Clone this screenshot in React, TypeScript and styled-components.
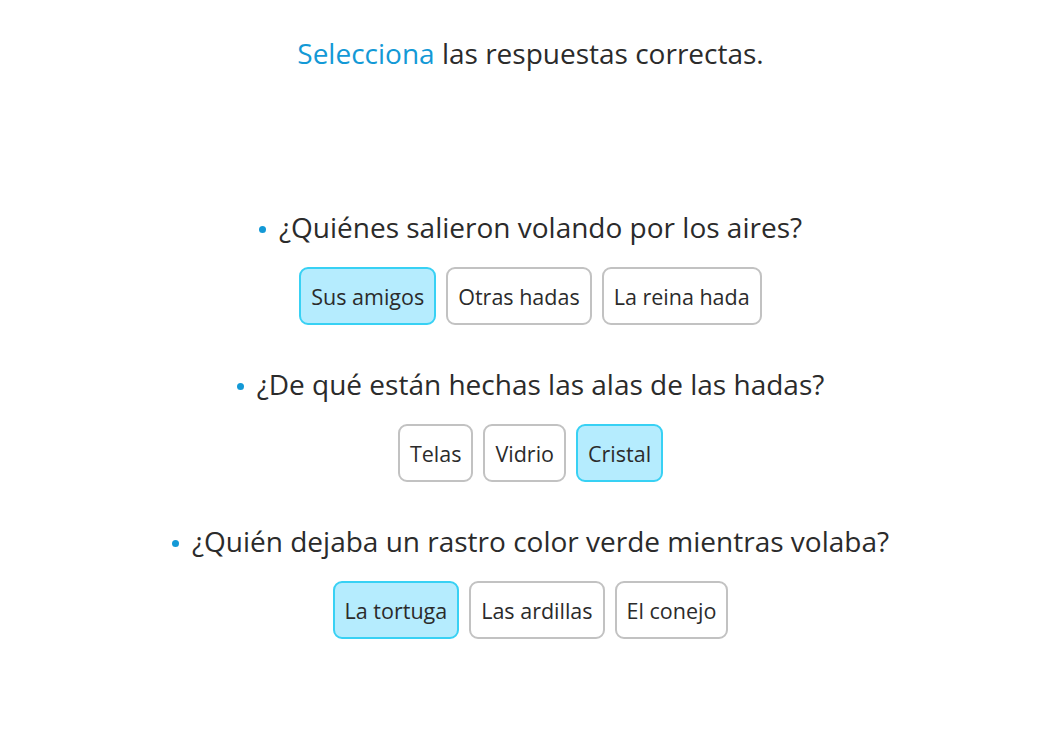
import React, { useState } from "react";
import styled, { createGlobalStyle } from "styled-components";

const Global = createGlobalStyle`
  html, body { margin: 0; padding: 0; background: #ffffff; }
  body { font-family: "Open Sans", "Noto Sans", sans-serif; color: #2b2b2b; }
`;

const Page = styled.div`
  display: flex;
  flex-direction: column;
  align-items: center;
  padding-top: 34px;
`;

const Title = styled.h1`
  margin: 0;
  font-size: 28px;
  font-weight: 400;
  line-height: 38px;
  color: #2b2b2b;
`;

const Accent = styled.span`
  color: #1399d6;
`;

const Questions = styled.div`
  display: flex;
  flex-direction: column;
  align-items: center;
  gap: 40px;
  margin-top: 136px;
`;

const Block = styled.div`
  display: flex;
  flex-direction: column;
  align-items: center;
  gap: 21px;
`;

const Question = styled.div`
  display: flex;
  align-items: center;
  gap: 13px;
  font-size: 28px;
  line-height: 38px;
`;

const Bullet = styled.span`
  width: 7px;
  height: 7px;
  margin-top: 4px;
  border-radius: 50%;
  background: #1399d6;
`;

const Options = styled.div`
  display: flex;
  gap: 10px;
`;

const Option = styled.button<{ $selected: boolean }>`
  font-family: inherit;
  font-size: 21.5px;
  color: #2b2b2b;
  height: 58px;
  padding: 0 10px;
  border-radius: 9px;
  border: 2.5px solid ${(p) => (p.$selected ? "#38d1f4" : "#c2c2c2")};
  background: ${(p) => (p.$selected ? "#b5ecfe" : "#ffffff")};
  cursor: pointer;
`;

const data = [
  { q: "¿Quiénes salieron volando por los aires?", opts: ["Sus amigos", "Otras hadas", "La reina hada"], sel: 0 },
  { q: "¿De qué están hechas las alas de las hadas?", opts: ["Telas", "Vidrio", "Cristal"], sel: 2 },
  { q: "¿Quién dejaba un rastro color verde mientras volaba?", opts: ["La tortuga", "Las ardillas", "El conejo"], sel: 0 },
];

export default function App() {
  const [sel, setSel] = useState(data.map((d) => d.sel));
  return (
    <Page>
      <Global />
      <Title>
        <Accent>Selecciona</Accent> las respuestas correctas.
      </Title>
      <Questions>
        {data.map((d, i) => (
          <Block key={i}>
            <Question>
              <Bullet />
              {d.q}
            </Question>
            <Options>
              {d.opts.map((o, j) => (
                <Option
                  key={o}
                  $selected={sel[i] === j}
                  onClick={() => setSel((s) => s.map((v, k) => (k === i ? j : v)))}
                >
                  {o}
                </Option>
              ))}
            </Options>
          </Block>
        ))}
      </Questions>
    </Page>
  );
}
